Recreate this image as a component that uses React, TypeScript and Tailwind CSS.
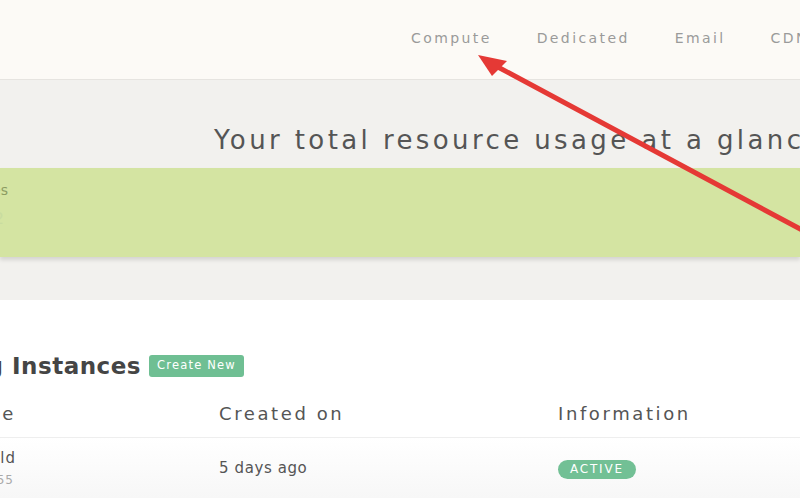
import React from "react";

export default function App() {
  return (
    <div
      className="relative w-[800px] h-[500px] overflow-hidden bg-white"
      style={{ fontFamily: '"DejaVu Sans", "Open Sans", sans-serif' }}
    >
      {/* Top nav */}
      <header className="h-[80px] bg-[#fcfaf6] border-b border-[#e6e4e0] flex items-center pl-[411px] gap-[45px] whitespace-nowrap text-[14px] tracking-[2.4px] text-[#9a9a9a] pb-[2px]">
        <span>Compute</span>
        <span>Dedicated</span>
        <span>Email</span>
        <span>CDN</span>
      </header>

      {/* Usage section */}
      <section className="h-[220px] bg-[#f2f1ee] flex flex-col">
        <h1 className="pl-[214px] pt-[42px] h-[88px] whitespace-nowrap text-[26px] leading-[36px] tracking-[3.4px] text-[#555555]">
          Your total resource usage at a glance
        </h1>
        <div className="h-[89px] bg-[#d4e4a2] shadow-[0_3px_4px_rgba(0,0,0,0.12)] flex flex-col">
          <div className="w-[8px] flex justify-end pt-[12px] whitespace-nowrap text-[14px] text-[#8c9c62]">
            <span>Instances</span>
          </div>
          <div className="w-[4px] flex justify-end pt-[6px] whitespace-nowrap text-[16px] text-[#c9dca0]">
            <span>12</span>
          </div>
        </div>
      </section>

      {/* Instances */}
      <section className="bg-white">
        <div className="h-[46px]" />
        <div className="flex items-center h-[40px]">
          <div className="w-[141px] flex justify-end whitespace-nowrap">
            <h2 className="text-[23px] font-semibold tracking-[0.5px] text-[#454545]">
              Running Instances
            </h2>
          </div>
          <span className="ml-[8px] h-[22px] px-[8px] flex items-center rounded-[3px] bg-[#6fbf93] text-white text-[11.5px] tracking-[1.2px]">
            Create New
          </span>
        </div>
        <div className="grid grid-cols-[219px_339px_1fr] h-[52px] items-center border-b border-[#eeeeee] text-[18px] tracking-[2.6px] text-[#555555] pt-[3px]">
          <div className="w-[16px] flex justify-end whitespace-nowrap">
            <span>Name</span>
          </div>
          <div>Created on</div>
          <div>Information</div>
        </div>
        <div className="grid grid-cols-[219px_339px_1fr] h-[60px] items-center bg-gradient-to-b from-white to-[#f7f7f7]">
          <div className="flex flex-col">
            <div className="w-[16px] flex justify-end whitespace-nowrap text-[15px] text-[#555555] tracking-[1px]">
              <span>build</span>
            </div>
            <div className="w-[14px] flex justify-end whitespace-nowrap text-[12px] text-[#aaaaaa] tracking-[1px] mt-[2px]">
              <span>10.0.0.55</span>
            </div>
          </div>
          <div className="text-[15px] tracking-[0.6px] text-[#555555]">5 days ago</div>
          <div>
            <span className="inline-flex items-center h-[19px] px-[12px] rounded-full bg-[#72c095] text-white text-[12px] tracking-[1.8px]">
              ACTIVE
            </span>
          </div>
        </div>
      </section>

      {/* Annotation arrow */}
      <svg
        className="absolute left-0 top-0 pointer-events-none"
        width="800"
        height="500"
        viewBox="0 0 800 500"
      >
        <line x1="496" y1="66" x2="830" y2="245" stroke="#e53935" strokeWidth="5" strokeLinecap="round" />
        <polygon points="478,55 507,61 492,76" fill="#e53935" />
      </svg>
    </div>
  );
}
